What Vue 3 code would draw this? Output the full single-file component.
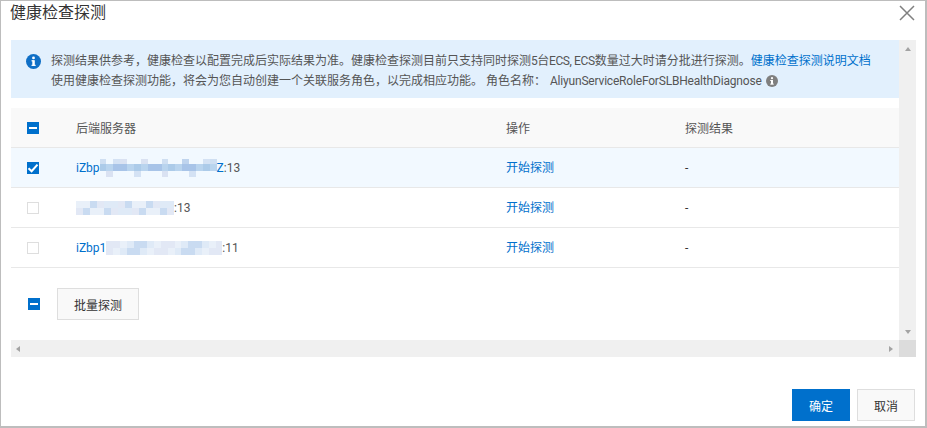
<script setup>
const soft = ['#dfeaf7', '#cfdff2', '#c9dbf1', '#dae2f2', '#e9f0f9', '#bfd4ee', '#e2e8f5', '#d4e2f4']
const strong = ['#b4cdea', '#accbe9', '#bcd3ee', '#a8c4e8', '#b9d4ee']
const pick = (list, i, seed) => list[(i * i * 3 + i * 5 + seed) % list.length]

const sparse = (w, seed) => {
  const cols = Math.round(w / 7)
  const cells = []
  for (let i = 0; i < cols; i++) cells.push(i % 3 === 0 || i % 7 === 2 ? pick(soft, i, seed) : 'transparent')
  for (let i = 0; i < cols; i++) cells.push(pick(strong, i, seed))
  for (let i = 0; i < cols; i++) cells.push(i % 4 === 1 ? pick(soft, i, seed + 2) : 'transparent')
  return { cols, cells, rows: '5px 7px 6px', height: 18 }
}
const dense = (w, seed) => {
  const cols = Math.round(w / 7)
  const cells = []
  for (let i = 0; i < cols * 2; i++) cells.push(pick(soft, i, seed))
  return { cols, cells, rows: '7px 7px', height: 14 }
}
const rows = [
  { sel: true, pre: 'iZbp', tail: 'Z', post: ':13', w: 117, m: sparse(117, 1) },
  { sel: false, pre: '', tail: '', post: ':13', w: 98, m: dense(98, 4) },
  { sel: false, pre: 'iZbp1', tail: '', post: ':11', w: 116, m: dense(116, 6) }
]
</script>

<template>
  <div class="dialog">
    <header class="head">
      <h1 class="title">健康检查探测</h1>
      <svg class="close" width="16" height="16" viewBox="0 0 16 16"><path d="M1 1 15 15M15 1 1 15" stroke="#808080" stroke-width="1.5" fill="none" /></svg>
    </header>

    <div class="scroller">
      <div class="main">
        <div class="viewport">
          <div class="alert">
            <svg class="info" width="15" height="15" viewBox="0 0 15 15"><circle cx="7.5" cy="7.5" r="7.5" fill="#0f6fc6" /><rect x="6.3" y="6.2" width="2.5" height="5.6" fill="#fff" /><rect x="5.5" y="6.2" width="2" height="1.2" fill="#fff" /><rect x="5.5" y="10.8" width="4.2" height="1.1" fill="#fff" /><circle cx="7.5" cy="3.9" r="1.4" fill="#fff" /></svg>
            <div class="alert-text">
              <p class="first">探测结果供参考，健康检查以配置完成后实际结果为准。健康检查探测目前只支持同时探测<span class="tight">5台ECS, ECS</span>数量过大时请分批进行探测。<a class="link">健康检查探测说明文档</a></p>
              <p class="second">使用健康检查探测功能，将会为您自动创建一个关联服务角色，以完成相应功能。 角色名称： <span class="role">AliyunServiceRoleForSLBHealthDiagnose</span>
                <svg class="tip" width="12" height="12" viewBox="0 0 12 12"><circle cx="6" cy="6" r="6" fill="#7f7f7f" /><rect x="5" y="5" width="2" height="4.2" fill="#fff" /><rect x="4.2" y="8.6" width="3.6" height="1" fill="#fff" /><rect x="4.2" y="5" width="2" height="1" fill="#fff" /><circle cx="6" cy="3.2" r="1.1" fill="#fff" /></svg>
              </p>
            </div>
          </div>

          <div class="row header">
            <div class="c-check"><span class="box on"><i class="dash"></i></span></div>
            <div class="c-name">后端服务器</div>
            <div class="c-op">操作</div>
            <div class="c-res">探测结果</div>
          </div>
          <div v-for="(r, i) in rows" :key="i" class="row" :class="{ selected: r.sel }">
            <div class="c-check">
              <span class="box" :class="{ on: r.sel }">
                <svg v-if="r.sel" width="12" height="12" viewBox="0 0 12 12"><path d="M1.5 6.2 4.6 9.2 10.5 2.6" stroke="#fff" stroke-width="2" fill="none" /></svg>
              </span>
            </div>
            <div class="c-name name">
              <span class="link">{{ r.pre }}</span>
              <span class="mosaic" :style="{ width: r.w + 'px', height: r.m.height + 'px', gridTemplateColumns: `repeat(${r.m.cols}, 1fr)`, gridTemplateRows: r.m.rows }">
                <i v-for="(c, j) in r.m.cells" :key="j" :style="{ background: c }"></i>
              </span>
              <span class="link">{{ r.tail }}</span><span class="post">{{ r.post }}</span>
            </div>
            <div class="c-op action"><a class="link">开始探测</a></div>
            <div class="c-res">-</div>
          </div>

          <div class="batch">
            <span class="box on"><i class="dash"></i></span>
            <button class="btn ghost batch-btn">批量探测</button>
          </div>
        </div>
        <div class="hbar">
          <span class="arrow left"></span>
          <span class="arrow right"></span>
        </div>
      </div>
      <div class="vbar">
        <div class="vtrack">
          <span class="arrow up"></span>
          <span class="arrow down"></span>
        </div>
        <div class="corner"></div>
      </div>
    </div>

    <footer class="foot">
      <button class="btn primary">确定</button>
      <button class="btn ghost">取消</button>
    </footer>
  </div>
</template>

<style scoped>
.dialog {
  box-sizing: border-box;
  width: 927px;
  height: 428px;
  border: 1px solid #bdbdbd;
  border-right-width: 2px;
  border-bottom-width: 2px;
  background: #fff;
  display: flex;
  flex-direction: column;
  font-family: Roboto, "Noto Sans CJK SC", sans-serif;
  font-size: 12px;
  color: #333;
  overflow: hidden;
}
.head {
  height: 39px;
  flex: none;
  display: flex;
  align-items: flex-start;
  justify-content: space-between;
  padding: 0 10px 0 9px;
}
.title {
  margin: 0;
  font-size: 16px;
  font-weight: 400;
  line-height: 23px;
  color: #333;
}
.close { margin-top: 4px; }
.scroller {
  display: flex;
  height: 317px;
  flex: none;
  padding-left: 10px;
}
.main { width: 888px; display: flex; flex-direction: column; }
.viewport { height: 300px; overflow: hidden; }
.alert {
  height: 58px;
  box-sizing: border-box;
  background: #e2f0fd;
  display: flex;
  padding: 12px 0 0 15px;
  color: #555;
}
.info { flex: none; margin-top: 2px; }
.alert-text { margin-left: 10px; white-space: nowrap; line-height: 20px; margin-top: -1px; }
.alert-text p { margin: 0; height: 20px; }
.tight { letter-spacing: -0.4px; }
.second { display: flex; align-items: center; white-space: pre; }
.role { margin-left: 1px; letter-spacing: -0.19px; }
.tip { margin-left: 4px; }
.link { color: #0070cc; }
.row {
  display: flex;
  align-items: center;
  height: 40px;
  box-sizing: border-box;
  border-bottom: 1px solid #e8e8e8;
}
.header { background: #f9f9f9; margin-top: 10px; color: #555; }
.selected { background: #f2f9ff; }
.c-check { width: 65px; padding-left: 16px; box-sizing: border-box; display: flex; align-items: center; flex: none; }
.c-name { width: 430px; flex: none; }
.c-op { width: 179px; flex: none; }
.action { padding-bottom: 2px; }
.c-res { flex: 1; }
.name { display: flex; align-items: center; }
.box {
  width: 12px;
  height: 12px;
  box-sizing: border-box;
  border: 1px solid #dedede;
  background: #fff;
  display: flex;
  align-items: center;
  justify-content: center;
}
.box.on { background: #0070cc; border: none; }
.dash { display: block; width: 8px; height: 2px; background: #fff; }
.mosaic { display: grid; }
.mosaic i { display: block; }
.post { color: #555; }
.batch {
  display: flex;
  align-items: center;
  height: 32px;
  margin-top: 20px;
  padding-left: 17px;
}
.btn {
  font: inherit;
  height: 32px;
  box-sizing: border-box;
  padding: 0;
  cursor: pointer;
}
.ghost { background: #f9f9f9; border: 1px solid #dedede; color: #333; }
.batch-btn { width: 82px; margin-left: 17px; }
.hbar {
  height: 17px;
  flex: none;
  background: #f0f0f0;
  display: flex;
  align-items: center;
  justify-content: space-between;
  padding: 0 6px 0 5px;
}
.vbar { width: 17px; flex: none; display: flex; flex-direction: column; }
.vtrack {
  flex: 1;
  background: #f0f0f0;
  display: flex;
  flex-direction: column;
  align-items: center;
  justify-content: space-between;
  padding: 7px 0 6px;
}
.corner { height: 17px; background: #dcdcdc; }
.arrow { display: block; width: 0; height: 0; border-style: solid; border-color: transparent; }
.arrow.left { border-width: 3.5px 4px 3.5px 0; border-right-color: #a3a3a3; }
.arrow.right { border-width: 3.5px 0 3.5px 4px; border-left-color: #a3a3a3; }
.arrow.up { border-width: 0 3.5px 4px; border-bottom-color: #a3a3a3; }
.arrow.down { border-width: 4px 3.5px 0; border-top-color: #a3a3a3; }
.foot {
  flex: 1;
  display: flex;
  justify-content: flex-end;
  align-items: flex-end;
  gap: 7px;
  padding: 0 10px 5px 0;
}
.foot .btn { width: 58px; }
.primary { background: #0070cc; border: none; color: #fff; }
</style>

<style>
html, body { margin: 0; background: #fff; }
</style>
